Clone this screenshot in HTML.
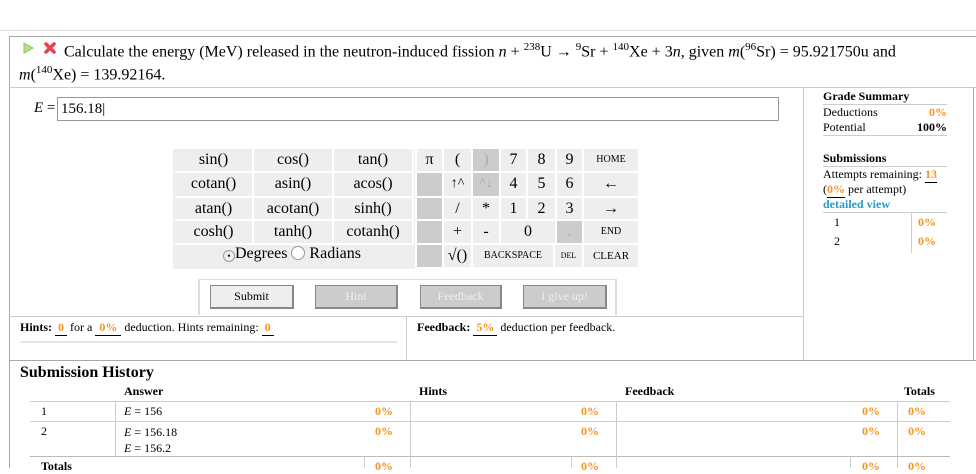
<!DOCTYPE html>
<html><head><meta charset="utf-8"><style>
*{margin:0;padding:0;box-sizing:border-box}
body{width:976px;height:468px;overflow:hidden;background:#fff;font-family:"Liberation Serif",serif;color:#000;position:relative}
.a{position:absolute;white-space:nowrap}
.o{color:#f7931e;font-weight:bold}
.u{border-bottom:1px solid #000;display:inline-block;text-align:center}
.c{position:absolute;background:#eee;border-right:2px solid #fff;border-bottom:2px solid #fff;text-align:center;font-size:16px;line-height:22px}
.g{background:#ccc;color:#aaa}
.s{font-size:10px}
.b{position:absolute;top:285px;height:24px;border:1px solid #888;border-right:2px solid #888;border-bottom:2px solid #888;font-size:12px;text-align:center;line-height:21px}
.hl{position:absolute;height:1px;background:#ccc}
.vl{position:absolute;width:1px;background:#ccc}
</style></head><body>
<div class="hl" style="left:0;top:30px;width:976px;background:#ddd"></div>
<div class="vl" style="left:9px;top:36px;height:432px;background:#aaa"></div>
<div class="hl" style="left:9px;top:36px;width:967px;background:#aaa"></div>
<div class="hl" style="left:9px;top:87px;width:967px"></div>
<div class="vl" style="left:973px;top:87px;height:274px;background:#aaa"></div>
<div class="vl" style="left:803px;top:87px;height:274px"></div>

<svg class="a" style="left:22px;top:41px" width="36" height="14"><path d="M2 2 L11 7 L2 12 Z" fill="#bde08e" stroke="#8cc152"/><path d="M24 3 L32 11 M32 3 L24 11" stroke="#e94150" stroke-width="3.5" stroke-linecap="round"/></svg>
<div class="a" style="left:64px;top:41px;font-size:16px">Calculate the energy (MeV) released in the neutron-induced fission <i>n</i> + <sup style="font-size:11px">238</sup>U → <sup style="font-size:11px">9</sup>Sr + <sup style="font-size:11px">140</sup>Xe + 3<i>n</i>, given <i>m</i>(<sup style="font-size:11px">96</sup>Sr) = 95.921750u and</div>
<div class="a" style="left:19px;top:64px;font-size:16px"><i>m</i>(<sup style="font-size:11px">140</sup>Xe) = 139.92164.</div>

<div class="a" style="left:34px;top:100px;font-size:15px"><i>E</i> =</div>
<div class="a" style="left:57px;top:97px;width:722px;height:24px;border:1px solid #999;font-size:15px;line-height:22px;padding-left:3px">156.18|</div>

<div class="a" style="left:173px;top:149px;width:242px;height:120px;background:#eee"></div>
<div class="c" style="left:175px;top:149px;width:79px;height:24px">sin()</div>
<div class="c" style="left:254px;top:149px;width:80px;height:24px">cos()</div>
<div class="c" style="left:334px;top:149px;width:80px;height:24px">tan()</div>
<div class="c" style="left:175px;top:173px;width:79px;height:25px">cotan()</div>
<div class="c" style="left:254px;top:173px;width:80px;height:25px">asin()</div>
<div class="c" style="left:334px;top:173px;width:80px;height:25px">acos()</div>
<div class="c" style="left:175px;top:198px;width:79px;height:23px">atan()</div>
<div class="c" style="left:254px;top:198px;width:80px;height:23px">acotan()</div>
<div class="c" style="left:334px;top:198px;width:80px;height:23px">sinh()</div>
<div class="c" style="left:175px;top:221px;width:79px;height:24px">cosh()</div>
<div class="c" style="left:254px;top:221px;width:80px;height:24px">tanh()</div>
<div class="c" style="left:334px;top:221px;width:80px;height:24px">cotanh()</div>
<div class="a" style="left:223px;top:244px;font-size:16px;line-height:20px"><span style="display:inline-block;width:12px;height:12px;border:1px solid #999;border-radius:50%;vertical-align:-1px;text-align:center;font-size:9px;line-height:10px">•</span>Degrees <span style="display:inline-block;width:14px;height:14px;border:1px solid #999;border-radius:50%;vertical-align:-2px;background:#fff"></span> Radians</div>

<div class="c" style="left:417px;top:149px;width:27px;height:24px">π</div>
<div class="c" style="left:444px;top:149px;width:29px;height:24px">(</div>
<div class="c g" style="left:473px;top:149px;width:28px;height:24px">)</div>
<div class="c" style="left:501px;top:149px;width:27px;height:24px">7</div>
<div class="c" style="left:528px;top:149px;width:29px;height:24px">8</div>
<div class="c" style="left:557px;top:149px;width:27px;height:24px">9</div>
<div class="c s" style="left:584px;top:149px;width:56px;height:24px">HOME</div>
<div class="c g" style="left:417px;top:173px;width:27px;height:25px"></div>
<div class="c" style="left:444px;top:173px;width:29px;height:25px;font-size:14px">↑^</div>
<div class="c g" style="left:473px;top:173px;width:28px;height:25px;font-size:14px">^↓</div>
<div class="c" style="left:501px;top:173px;width:27px;height:25px">4</div>
<div class="c" style="left:528px;top:173px;width:29px;height:25px">5</div>
<div class="c" style="left:557px;top:173px;width:27px;height:25px">6</div>
<div class="c" style="left:584px;top:173px;width:56px;height:25px">←</div>
<div class="c g" style="left:417px;top:198px;width:27px;height:23px"></div>
<div class="c" style="left:444px;top:198px;width:29px;height:23px">/</div>
<div class="c" style="left:473px;top:198px;width:28px;height:23px">*</div>
<div class="c" style="left:501px;top:198px;width:27px;height:23px">1</div>
<div class="c" style="left:528px;top:198px;width:29px;height:23px">2</div>
<div class="c" style="left:557px;top:198px;width:27px;height:23px">3</div>
<div class="c" style="left:584px;top:198px;width:56px;height:23px">→</div>
<div class="c g" style="left:417px;top:221px;width:27px;height:24px"></div>
<div class="c" style="left:444px;top:221px;width:29px;height:24px">+</div>
<div class="c" style="left:473px;top:221px;width:28px;height:24px">-</div>
<div class="c" style="left:501px;top:221px;width:56px;height:24px">0</div>
<div class="c g" style="left:557px;top:221px;width:27px;height:24px">.</div>
<div class="c s" style="left:584px;top:221px;width:56px;height:24px">END</div>
<div class="c g" style="left:417px;top:245px;width:27px;height:24px"></div>
<div class="c" style="left:444px;top:245px;width:29px;height:24px">√()</div>
<div class="c s" style="left:473px;top:245px;width:82px;height:24px">BACKSPACE</div>
<div class="c s" style="left:555px;top:245px;width:29px;height:24px;font-size:8px">DEL</div>
<div class="c s" style="left:584px;top:245px;width:56px;height:24px;font-size:11px">CLEAR</div>

<div class="a" style="left:823px;top:89px;font-size:12px;font-weight:bold;width:124px;border-bottom:1px solid #ccc;line-height:15px">Grade Summary</div>
<div class="a" style="left:823px;top:105px;font-size:12px;width:124px;line-height:15px">Deductions<span class="o" style="float:right">0%</span></div>
<div class="a" style="left:823px;top:120px;font-size:12px;width:124px;line-height:15px;border-bottom:1px solid #ccc">Potential<b style="float:right">100%</b></div>
<div class="a" style="left:823px;top:151px;font-size:12px;font-weight:bold;width:124px;border-bottom:1px solid #ccc;line-height:15px">Submissions</div>
<div class="a" style="left:823px;top:167px;font-size:12px;line-height:15px">Attempts remaining: <span class="o u">13</span></div>
<div class="a" style="left:823px;top:182px;font-size:12px;line-height:15px">(<span class="o u">0%</span> per attempt)</div>
<div class="a" style="left:823px;top:197px;font-size:12px;font-weight:bold;color:#2a9bc4;line-height:15px;width:124px;border-bottom:1px solid #ccc">detailed view</div>
<div class="vl" style="left:911px;top:213px;height:40px"></div>
<div class="a" style="left:834px;top:215px;font-size:12px">1</div>
<div class="a o" style="left:918px;top:215px;font-size:12px">0%</div>
<div class="a" style="left:834px;top:234px;font-size:12px">2</div>
<div class="a o" style="left:918px;top:234px;font-size:12px">0%</div>

<div class="a" style="left:198px;top:279px;width:419px;height:36px;border:2px solid #ddd;border-top:none;border-bottom:none"></div>
<div class="hl" style="left:198px;top:279px;width:419px;background:#ddd"></div>
<div class="b" style="left:210px;width:84px;background:#eee">Submit</div>
<div class="b" style="left:315px;width:83px;background:#ccc;color:#eee">Hint</div>
<div class="b" style="left:420px;width:82px;background:#ccc;color:#eee">Feedback</div>
<div class="b" style="left:523px;width:84px;background:#ccc;color:#eee">I give up!</div>

<div class="hl" style="left:9px;top:316px;width:794px"></div>
<div class="vl" style="left:406px;top:316px;height:45px"></div>
<div class="a" style="left:20px;top:320px;font-size:12px"><b>Hints:</b> <span class="o u" style="width:12px">0</span> for a <span class="o u" style="width:26px">0%</span> deduction. Hints remaining: <span class="o u" style="width:12px">0</span></div>
<div class="a" style="left:20px;top:341px;width:377px;height:2px;background:#e6e6e6"></div>
<div class="a" style="left:417px;top:320px;font-size:12px"><b>Feedback:</b> <span class="o u" style="width:24px">5%</span> deduction per feedback.</div>
<div class="hl" style="left:9px;top:360px;width:967px;background:#aaa"></div>

<div class="a" style="left:20px;top:364px;font-size:16px;font-weight:bold">Submission History</div>
<div class="a" style="left:124px;top:384px;font-size:12px;font-weight:bold">Answer</div>
<div class="a" style="left:419px;top:384px;font-size:12px;font-weight:bold">Hints</div>
<div class="a" style="left:625px;top:384px;font-size:12px;font-weight:bold">Feedback</div>
<div class="a" style="left:904px;top:384px;font-size:12px;font-weight:bold">Totals</div>
<div class="hl" style="left:30px;top:401px;width:920px"></div>
<div class="hl" style="left:30px;top:421px;width:920px"></div>
<div class="hl" style="left:30px;top:456px;width:920px;background:#bbb"></div>
<div class="vl" style="left:115px;top:401px;height:55px"></div>
<div class="vl" style="left:410px;top:401px;height:67px"></div>
<div class="vl" style="left:616px;top:401px;height:67px"></div>
<div class="vl" style="left:897px;top:401px;height:67px"></div>
<div class="vl" style="left:364px;top:456px;height:12px"></div>
<div class="vl" style="left:571px;top:456px;height:12px"></div>
<div class="vl" style="left:850px;top:456px;height:12px"></div>
<div class="a" style="left:41px;top:404px;font-size:12px">1</div>
<div class="a" style="left:124px;top:404px;font-size:12px"><i>E</i> = 156</div>
<div class="a o" style="left:375px;top:404px;font-size:12px">0%</div>
<div class="a o" style="left:581px;top:404px;font-size:12px">0%</div>
<div class="a o" style="left:862px;top:404px;font-size:12px">0%</div>
<div class="a o" style="left:908px;top:404px;font-size:12px">0%</div>
<div class="a" style="left:41px;top:424px;font-size:12px">2</div>
<div class="a" style="left:124px;top:424px;font-size:12px;line-height:16px"><i>E</i> = 156.18<br><i>E</i> = 156.2</div>
<div class="a o" style="left:375px;top:424px;font-size:12px">0%</div>
<div class="a o" style="left:581px;top:424px;font-size:12px">0%</div>
<div class="a o" style="left:862px;top:424px;font-size:12px">0%</div>
<div class="a o" style="left:908px;top:424px;font-size:12px">0%</div>
<div class="a" style="left:41px;top:459px;font-size:12px;font-weight:bold">Totals</div>
<div class="a o" style="left:375px;top:459px;font-size:12px">0%</div>
<div class="a o" style="left:581px;top:459px;font-size:12px">0%</div>
<div class="a o" style="left:862px;top:459px;font-size:12px">0%</div>
<div class="a o" style="left:908px;top:459px;font-size:12px">0%</div>
</body></html>
